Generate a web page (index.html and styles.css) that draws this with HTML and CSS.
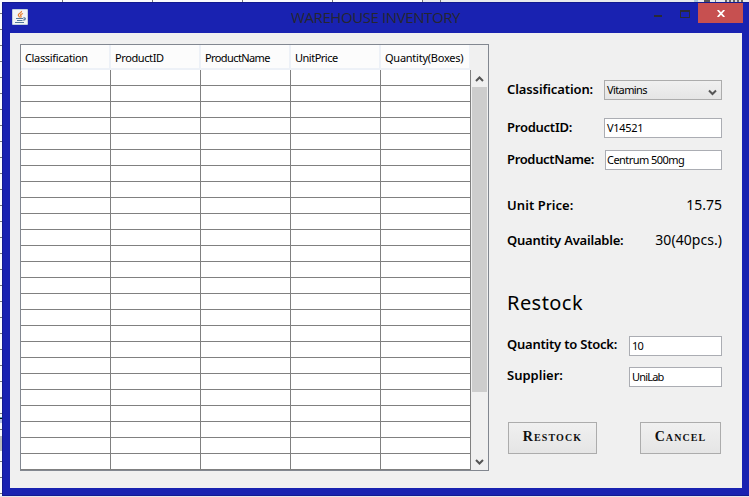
FILE: index.html
```html
<!DOCTYPE html>
<html lang="en">
<head>
<meta charset="utf-8">
<title>Warehouse Inventory</title>
<link rel="stylesheet" href="styles.css">
</head>
<body>
<div class="desktop">
  <div class="strip-top"></div>
  <div class="strip-left"></div>
  <div class="window">
    <header class="titlebar">
      <svg class="java" width="16" height="16" viewBox="0 0 16 16">
        <rect width="16" height="16" rx="1" fill="#c3d0dc"/>
        <rect x="1" y="1" width="14" height="14" fill="#f3f5f6"/>
        <path d="M9.500 2C10 4 6 4.500 6.300 6.200C6.400 7 7.500 7.500 7.500 8.500M11 4.500C8.500 5.300 8.200 6 9 7C9.300 7.500 9 8 8.600 8.600" fill="none" stroke="#e8812f" stroke-width="1.300"/>
        <path d="M4 9.500H11M5 11.500H10.500M3 13.500H12M11.300 9C14 8.200 14 10.800 11.200 11.200" fill="none" stroke="#53799b" stroke-width="1.200"/>
      </svg>
      <h1 class="title">WAREHOUSE INVENTORY</h1>
      <div class="controls">
        <svg class="min" width="8" height="2"><rect width="8" height="2" fill="#292a36"/></svg>
        <svg class="max" width="10" height="8"><path d="M0 0H10V8H0ZM1 2V7H9V2Z" fill="#292a36" fill-rule="evenodd"/></svg>
        <div class="close"><svg width="8" height="7" viewBox="0 0 8 7"><path d="M.7 0L7.300 7M7.300 0L.7 7" stroke="#fff" stroke-width="1.800"/></svg></div>
      </div>
    </header>
    <main class="client">
      <section class="table-pane">
        <div class="thead">
          <div class="th h1">Classification</div>
          <div class="th h2">ProductID</div>
          <div class="th h3">ProductName</div>
          <div class="th h4">UnitPrice</div>
          <div class="th h5">Quantity(Boxes)</div>
        </div>
        <div class="tbody">
          <div class="grid"></div>
          <div class="scrollbar">
            <svg class="arrow" width="15" height="17" viewBox="0 0 15 17"><path d="M4 11L7.500 7.500L11 11" fill="none" stroke="#555" stroke-width="2"/></svg>
            <div class="thumb"></div>
            <svg class="arrow bottom" width="15" height="17" viewBox="0 0 15 17"><path d="M4 7L7.500 10.500L11 7" fill="none" stroke="#555" stroke-width="2"/></svg>
          </div>
        </div>
      </section>
      <section class="form">
        <div class="row r1"><span class="label l1">Classification:</span><div class="field select"><span class="v1">Vitamins</span><svg width="9" height="7" viewBox="0 0 9 7"><path d="M1 1.500L4.500 5L8 1.500" fill="none" stroke="#555" stroke-width="2"/></svg></div></div>
        <div class="row r2"><span class="label l2">ProductID:</span><div class="field"><span class="v2">V14521</span></div></div>
        <div class="row r3"><span class="label l3">ProductName:</span><div class="field name"><span class="v3">Centrum 500mg</span></div></div>
        <div class="row r4"><span class="label l4">Unit Price:</span><span class="value">15.75</span></div>
        <div class="row r5"><span class="label l5">Quantity Available:</span><span class="value pieces">30(40pcs.)</span></div>
        <h2 class="heading">Restock</h2>
        <div class="row r6"><span class="label l6">Quantity to Stock:</span><div class="field short"><span class="v4">10</span></div></div>
        <div class="row r7"><span class="label l7">Supplier:</span><div class="field short"><span class="v5">UniLab</span></div></div>
        <div class="buttons"><button class="btn restock">Restock</button><button class="btn cancel">Cancel</button></div>
      </section>
    </main>
  </div>
</div>
</body>
</html>
```
FILE: styles.css
```css
* { box-sizing: border-box; }
body { margin: 0; overflow: hidden; }
.desktop {
  width: 749px; height: 497px; background: #e4e5ea;
  display: grid; grid-template: 2px 494px / 2px 747px;
}
.strip-top {
  grid-column: 1 / 3;
  background:
    linear-gradient(#777, #777) 62px 0 / 1px 2px no-repeat,
    linear-gradient(#777, #777) 152px 0 / 1px 2px no-repeat,
    linear-gradient(#777, #777) 242px 0 / 1px 2px no-repeat,
    linear-gradient(#777, #777) 332px 0 / 1px 2px no-repeat,
    linear-gradient(#777, #777) 422px 0 / 1px 2px no-repeat,
    linear-gradient(#777, #777) 440px 0 / 1px 2px no-repeat,
    linear-gradient(#555, #555) 704px 0 / 6px 2px no-repeat,
    linear-gradient(#777, #777) 715px 0 / 1px 2px no-repeat,
    repeating-linear-gradient(90deg, #666 0 2px, #ddd 2px 4px) 725px 0 / 18px 2px no-repeat,
    linear-gradient(#a9c8e0, #a9c8e0) 694px 0 / 4px 2px no-repeat,
    linear-gradient(90deg, #fafbfc 422px, #e9eaec 422px);
}
.strip-left {
  background:
    linear-gradient(#777, #777) 0 395px / 2px 2px no-repeat,
    linear-gradient(#5aa9c4 1px, #111 1px 2px, #b7c1e6 2px) 0 415px / 2px 6px no-repeat,
    linear-gradient(#bbb, #bbb) 0 434px / 2px 15px no-repeat,
    repeating-linear-gradient(#fafbfc 0 11px, #777 11px 12px, #fafbfc 12px 16px);
}
.window { background: #1922b1; border: 1px solid #121a91; border-right: 0; }
.titlebar { height: 30px; display: flex; align-items: flex-start; }
.java { display: block; margin: 6px 0 0 9px; }
.title {
  margin: 3px 0 0 263px; width: 176px; font: 400 15px/22px "Open Sans", sans-serif;
  letter-spacing: -0.4px; color: #25262f; white-space: nowrap;
}
.controls { display: flex; margin-left: auto; margin-right: 6px; }
.min { margin: 12px 18px 0 0; }
.max { margin: 7px 8px 0 0; }
.close { width: 45px; height: 20px; background: #c75050; display: flex; align-items: center; justify-content: center; }
.client {
  margin-left: 7px; width: 732px; height: 455px; background: #f0f0f0;
  display: flex; align-items: flex-start; font-family: "Noto Sans", sans-serif; color: #000;
}
.table-pane { margin: 11px 0 0 10px; width: 469px; height: 427px; border: 1px solid #828790; flex: none; }
.thead { display: grid; grid-template-columns: repeat(5, 90px); grid-auto-rows: 25px; width: 449px; overflow: hidden; }
.th {
  background: #fcfcfc; border-right: 2px solid #edf1f7; border-bottom: 2px solid #edf1f7;
  padding-left: 4px; font-size: 11px; line-height: 25px; white-space: nowrap;
}
.h1 { letter-spacing: -0.35px; }
.h2 { letter-spacing: -0.4px; }
.h3 { letter-spacing: -0.6px; }
.h4 { letter-spacing: -0.5px; }
.h5 { letter-spacing: -0.25px; }
.tbody { display: flex; height: 400px; }
.grid {
  width: 450px;
  background:
    repeating-linear-gradient(transparent 0 15px, #808080 15px 16px),
    repeating-linear-gradient(90deg, transparent 0 89px, #808080 89px 90px), #fff;
}
.scrollbar { width: 17px; padding: 0 1px; display: flex; flex-direction: column; }
.arrow { display: block; flex: none; }
.thumb { height: 305px; background: #cdcdcd; }
.bottom { margin-top: auto; }
.form { margin: 47px 0 0 18px; width: 215px; }
.row { display: flex; justify-content: space-between; height: 20px; }
.label { font-size: 13px; font-weight: 600; line-height: 19px; white-space: nowrap; }
.l1 { letter-spacing: -0.1px; }
.l2 { letter-spacing: -0.25px; }
.l3 { letter-spacing: -0.35px; }
.l4 { letter-spacing: 0.1px; }
.l5, .l6 { letter-spacing: -0.22px; }
.field {
  width: 118px; height: 20px; border: 1px solid #abadb3; background: #fff;
  font-size: 11px; line-height: 18px; padding-left: 2px; white-space: nowrap;
}
.select {
  background: linear-gradient(#f0f0f0, #e5e5e5); border-color: #acacac;
  display: flex; justify-content: space-between; padding: 0 4px 0 2px;
}
.select svg { margin-top: 8px; }
.name { width: 117px; padding-left: 1px; }
.short { width: 93px; }
.v1 { letter-spacing: -0.6px; }
.v2 { letter-spacing: -0.3px; }
.v3 { letter-spacing: -0.55px; }
.v4 { letter-spacing: -0.8px; }
.v5 { letter-spacing: -0.8px; }
.value { font-size: 14px; line-height: 18px; white-space: nowrap; }
.pieces { letter-spacing: 0.05px; }
.r2 { margin-top: 18px; }
.r3 { margin-top: 12px; }
.r4 { margin-top: 26px; }
.r5 { margin-top: 15px; }
.heading { margin: 37px 0 0 0; font-size: 20px; line-height: 30px; font-weight: 400; letter-spacing: 0.45px; }
.r6 { margin-top: 18px; }
.r6 .label, .r7 .label { line-height: 17px; }
.r7 { margin-top: 11px; }
.buttons { display: flex; justify-content: space-between; margin: 35px 1px 0 1px; }
.btn {
  height: 32px; padding: 0 0 2px; border: 1px solid #acacac; background: linear-gradient(#f0f0f0, #e5e5e5);
  font: 700 14px/28px "Liberation Serif", serif; font-variant: small-caps; color: #111; letter-spacing: 1.1px;
}
.restock { width: 89px; }
.cancel { width: 81px; }
```
